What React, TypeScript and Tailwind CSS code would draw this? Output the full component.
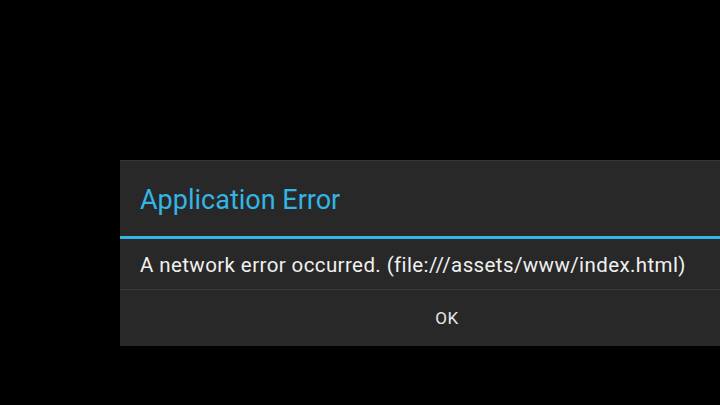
export default function App() {
  return (
    <div className="w-[720px] h-[405px] bg-black overflow-hidden pt-[160px] pl-[120px]" style={{ fontFamily: "Roboto, 'Liberation Sans', sans-serif" }}>
      <div className="w-[654px] bg-[#282828] border-t border-[#353535]">
        {/* Title */}
        <div className="h-[75px] flex items-center pl-[20px] pt-[4px]">
          <span className="text-[27px] text-[#33b5e5] leading-none">Application Error</span>
        </div>
        <div className="h-[3px] bg-[#33b5e5]" />
        {/* Message */}
        <div className="h-[51px] flex items-center pl-[20px] pt-[2px] border-b border-[#3a3a3a]">
          <span className="text-[20.5px] text-[#f0f0f0] leading-none tracking-[0.4px]">
            A network error occurred. (file:///assets/www/index.html)
          </span>
        </div>
        {/* Button */}
        <div className="h-[56px] flex items-center justify-center pt-[1px]">
          <span className="text-[17px] text-[#e8e8e8] leading-none tracking-[0.5px]">OK</span>
        </div>
      </div>
    </div>
  );
}
